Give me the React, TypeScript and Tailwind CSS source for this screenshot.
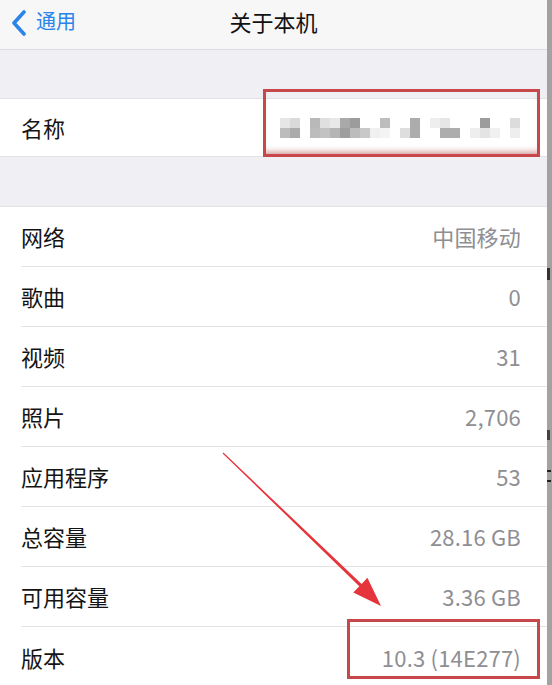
import React from 'react';

const font = { fontFamily: '"Noto Sans CJK SC", "Noto Sans", sans-serif' };

const rows: { label: string; value: string }[] = [
  { label: '网络', value: '中国移动' },
  { label: '歌曲', value: '0' },
  { label: '视频', value: '31' },
  { label: '照片', value: '2,706' },
  { label: '应用程序', value: '53' },
  { label: '总容量', value: '28.16 GB' },
  { label: '可用容量', value: '3.36 GB' },
  { label: '版本', value: '10.3 (14E277)' },
];

// blurred device name, two rows of mosaic cells
const mosaicTop = [
  '#e6e6e6', '#dadada', '#ffffff', '#b9b9b9', '#e0e0e0', '#e8e8e8', '#a9a9a9', '#9c9c9c',
  '#ffffff', '#ffffff', '#bdbdbd', '#ffffff', '#ffffff', '#acacac', '#ffffff', '#eeeeee',
  '#e6e6e6', '#ffffff', '#ffffff', '#ffffff', '#9c9c9c', '#ffffff', '#ffffff', '#dcdcdc',
];
const mosaicBottom = [
  '#bcbcbc', '#ababab', '#ffffff', '#bcbcbc', '#c2c2c2', '#b5b5b5', '#9e9e9e', '#bcbcbc',
  '#c8c8c8', '#f0f0f0', '#f4f4f4', '#ffffff', '#dedede', '#acacac', '#ffffff', '#ffffff',
  '#adadad', '#adadad', '#ffffff', '#eeeeee', '#e4e4e4', '#f0f0f0', '#ffffff', '#eeeeee',
];

function NameMosaic() {
  return (
    <div className="flex flex-col">
      {[mosaicTop, mosaicBottom].map((line, r) => (
        <div key={r} className="flex">
          {line.map((c, i) => (
            <div key={i} className="w-[10px] h-[10px]" style={{ backgroundColor: c }} />
          ))}
        </div>
      ))}
    </div>
  );
}

function Row({ label, value, last }: { label: string; value: string; last?: boolean }) {
  return (
    <div className="bg-white pl-[21px]">
      <div
        className={`h-[60px] flex items-center justify-between pr-[26px] ${
          last ? '' : 'border-b border-[#e3e3e6]'
        }`}
      >
        <span className="text-[22px] text-[#141414]">{label}</span>
        <span className="text-[22px] tracking-[0.2px] text-[#8e8e93]">{value}</span>
      </div>
    </div>
  );
}

export default function App() {
  return (
    <div className="relative w-[552px] h-[685px] overflow-hidden flex" style={font}>
      <div className="w-[547px] h-full bg-[#efeff4] flex flex-col">
        {/* nav bar */}
        <div className="h-[50px] shrink-0 bg-[#f7f7f8] border-b border-[#dcdce0] relative flex items-center pb-[4px]">
          <div className="flex items-center pl-[10px] gap-[8px] text-[#2a84ea]">
            <svg width="18" height="26" viewBox="0 0 18 26" fill="none">
              <path d="M14 2 L4 13 L14 24" stroke="currentColor" strokeWidth="3.6" strokeLinecap="round" strokeLinejoin="round" />
            </svg>
            <span className="text-[20px] leading-none pb-[3px]">通用</span>
          </div>
          <div className="absolute left-0 right-0 top-[10px] text-center text-[22px] text-[#111] leading-none pointer-events-none">
            关于本机
          </div>
        </div>

        <div className="h-[48px] shrink-0" />

        {/* name */}
        <div className="bg-white h-[59px] shrink-0 pl-[21px] pr-[27px] flex items-center justify-between border-y border-[#e3e3e6]">
          <span className="text-[22px] text-[#141414]">名称</span>
          <NameMosaic />
        </div>

        <div className="h-[49px] shrink-0" />

        <div className="border-t border-[#e3e3e6]">
          {rows.map((r, i) => (
            <Row key={r.label} label={r.label} value={r.value} last={i === rows.length - 1} />
          ))}
        </div>
      </div>

      {/* edge of neighbouring window */}
      <div className="w-[5px] h-full bg-[#a2a2a2] flex flex-col">
        <div className="h-[268px]" />
        <div className="h-[12px] w-[3px] bg-[#333]" />
        <div className="h-[150px]" />
        <div className="h-[10px] w-[3px] bg-[#444]" />
        <div className="h-[30px]" />
        <div className="h-[2px] w-[4px] bg-[#222]" />
        <div className="h-[8px]" />
        <div className="h-[2px] w-[4px] bg-[#222]" />
      </div>

      {/* annotations */}
      <div className="absolute left-[263px] top-[89px] w-[277px] h-[68px] border-[3px] border-[#c8474b] shadow-[inset_0_-7px_6px_-5px_rgba(170,60,60,0.55)]" />
      <div className="absolute left-[347px] top-[619px] w-[193px] h-[60px] border-[3px] border-[#c8474b]" />
      <svg className="absolute left-0 top-0 pointer-events-none" width="552" height="685">
        <polygon
          points="222.6,453.4 359.3,586.2 353.3,592.5 381,606 367.4,577.8 361.6,583.9 223.4,452.6"
          fill="#e5343b"
        />
      </svg>
    </div>
  );
}
